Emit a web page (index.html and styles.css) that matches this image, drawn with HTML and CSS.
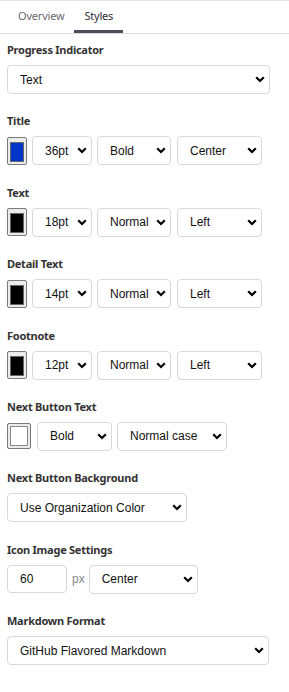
FILE: index.html
```html
<!DOCTYPE html>
<html>
<head>
<meta charset="utf-8">
<link rel="stylesheet" href="styles.css">
</head>
<body>
<div class="tabs">
  <div class="tab">Overview</div>
  <div class="tab active">Styles</div>
</div>
<div class="panel">
  <section class="field">
    <div class="label">Progress Indicator</div>
    <div class="row"><select class="sel w-progress"><option>Text</option></select></div>
  </section>
  <section class="field">
    <div class="label">Title</div>
    <div class="row">
      <div class="swatch"><span class="chip chip-blue"></span></div>
      <select class="sel w-size"><option>36pt</option></select>
      <select class="sel w-weight"><option>Bold</option></select>
      <select class="sel w-align"><option>Center</option></select>
    </div>
  </section>
  <section class="field">
    <div class="label">Text</div>
    <div class="row">
      <div class="swatch"><span class="chip chip-black"></span></div>
      <select class="sel w-size"><option>18pt</option></select>
      <select class="sel w-weight"><option>Normal</option></select>
      <select class="sel w-align"><option>Left</option></select>
    </div>
  </section>
  <section class="field">
    <div class="label">Detail Text</div>
    <div class="row">
      <div class="swatch"><span class="chip chip-black"></span></div>
      <select class="sel w-size"><option>14pt</option></select>
      <select class="sel w-weight"><option>Normal</option></select>
      <select class="sel w-align"><option>Left</option></select>
    </div>
  </section>
  <section class="field">
    <div class="label">Footnote</div>
    <div class="row">
      <div class="swatch"><span class="chip chip-black"></span></div>
      <select class="sel w-size"><option>12pt</option></select>
      <select class="sel w-weight"><option>Normal</option></select>
      <select class="sel w-align"><option>Left</option></select>
    </div>
  </section>
  <section class="field">
    <div class="label">Next Button Text</div>
    <div class="row">
      <div class="swatch swatch-wide"><span class="chip chip-white"></span></div>
      <select class="sel w-btnweight"><option>Bold</option></select>
      <select class="sel w-case"><option>Normal case</option></select>
    </div>
  </section>
  <section class="field">
    <div class="label">Next Button Background</div>
    <div class="row"><select class="sel w-bg"><option>Use Organization Color</option></select></div>
  </section>
  <section class="field">
    <div class="label">Icon Image Settings</div>
    <div class="row">
      <input class="num" type="text" value="60">
      <span class="unit">px</span>
      <select class="sel w-iconalign"><option>Center</option></select>
    </div>
  </section>
  <section class="field">
    <div class="label">Markdown Format</div>
    <div class="row"><select class="sel w-md"><option>GitHub Flavored Markdown</option></select></div>
  </section>
</div>
</body>
</html>
```

FILE: styles.css
```css
html, body {
  margin: 0;
  padding: 0;
  background: #fff;
}

body {
  width: 289px;
  font-family: "Liberation Sans", Arial, sans-serif;
  color: #111;
}

.tabs {
  display: flex;
  height: 32px;
  padding-left: 8px;
  border-top: 1px solid #e4e4e8;
  border-bottom: 1px solid #dcdce0;
}

.tab {
  padding: 0 10px;
  font-family: "Noto Sans", sans-serif;
  font-size: 11px;
  letter-spacing: -0.2px;
  line-height: 30px;
  color: #6a6a72;
  border-bottom: 3px solid transparent;
  height: 29px;
}

.tab.active {
  color: #2e2e36;
  border-bottom-color: #4b4b5a;
}

.panel {
  padding: 8px 0 0 7px;
}

.field {
  margin-bottom: 19.4px;
}

.label {
  font-family: "Noto Sans", sans-serif;
  font-weight: 700;
  font-size: 11px;
  letter-spacing: -0.25px;
  line-height: 16px;
  color: #333;
  margin-bottom: 7px;
}

.row {
  display: flex;
  align-items: center;
  gap: 5px;
  height: 29px;
}

.sel {
  appearance: none;
  -webkit-appearance: none;
  box-sizing: border-box;
  height: 29px;
  margin: 0;
  padding: 0 0 0 12px;
  border: 1px solid #d9d9dc;
  border-radius: 4px;
  background-color: #fff;
  background-image: url("data:image/svg+xml;utf8,<svg xmlns='http://www.w3.org/2000/svg' width='10' height='7' viewBox='0 0 10 7'><path d='M1.2 1.3 L5 5 L8.8 1.3' fill='none' stroke='black' stroke-width='2.2'/></svg>");
  background-repeat: no-repeat;
  background-position: right 4px center;
  background-size: 10px 7px;
  font-family: "Liberation Sans", Arial, sans-serif;
  font-size: 12px;
  color: #111;
  outline: none;
}

.w-progress { width: 263px; }
.w-size { width: 60px; }
.w-weight { width: 74px; }
.w-align { width: 85px; margin-left: 1px; }
.w-btnweight { width: 75px; margin-left: 1px; }
.w-case { width: 110px; }
.w-bg { width: 180px; }
.w-iconalign { width: 109px; }
.w-md { width: 262px; }

.swatch {
  box-sizing: border-box;
  width: 20px;
  height: 28px;
  padding: 4px 2px 2px;
  border: 1px solid #7a7a7a;
  border-radius: 2px;
  background: #ececec;
  display: flex;
}

.swatch-wide {
  width: 24px;
  height: 26px;
  padding: 2px;
}

.chip {
  flex: 1;
  border: 1px solid #666;
}

.chip-blue { background: #0335c8; }
.chip-black { background: #000; }
.chip-white { background: #fff; border-color: #888; }

.num {
  box-sizing: border-box;
  width: 60px;
  height: 28px;
  margin: 0;
  padding: 0 0 0 12px;
  border: 1px solid #d9d9dc;
  border-radius: 4px;
  font-family: "Liberation Sans", Arial, sans-serif;
  font-size: 12px;
  color: #111;
  outline: none;
}

.unit {
  font-family: "Liberation Sans", Arial, sans-serif;
  font-size: 12px;
  color: #888;
  margin-right: -1px;
}
```
